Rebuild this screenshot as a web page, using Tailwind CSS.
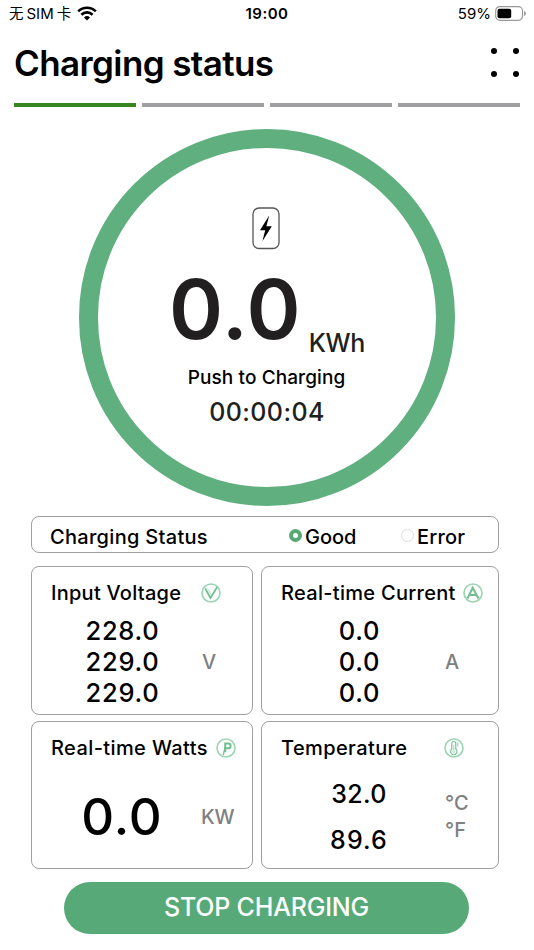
<!DOCTYPE html>
<html lang="en">
<head>
    <meta charset="UTF-8">
    <meta name="viewport" content="width=device-width, initial-scale=1.0">
    <title>Charging status</title>
    <script src="https://cdn.jsdelivr.net/npm/@tailwindcss/browser@4"></script>
</head>

<body class="bg-white text-black font-['Inter','Noto_Sans_CJK_SC',sans-serif]">
    <div class="w-[534px] h-[950px] overflow-hidden flex flex-col">
        <!-- Status bar -->
        <div class="h-7 pl-[9px] pr-[8px] grid grid-cols-3 items-center text-[15px] leading-7 whitespace-nowrap">
            <div class="flex items-center">
                <span class="text-[14.5px]">无</span><span class="ml-[3px] text-[15px]">SIM</span><span class="ml-[3px] text-[14.5px]">卡</span>
                <svg class="ml-[6px] -mt-[2px]" width="20" height="15" viewBox="0 0 20 15" fill="none" stroke="#000" stroke-width="2.6">
                    <path d="M1.2 5.4a12.6 12.6 0 0 1 17.6 0"/>
                    <path d="M4.4 8.7a8 8 0 0 1 11.2 0"/>
                    <path d="M10 14.4l-3-3a4.3 4.3 0 0 1 6 0z" fill="#000" stroke="none"/>
                </svg>
            </div>
            <p class="-ml-px text-center font-semibold tracking-[0.5px]">19:00</p>
            <div class="flex items-center justify-end">
                <span>59%</span>
                <svg class="ml-[4px] -mt-px" width="31" height="15" viewBox="0 0 31 15">
                    <rect x="0.7" y="0.7" width="26.8" height="13.6" rx="4" fill="none" stroke="#999" stroke-width="1.2"/>
                    <rect x="2.5" y="2.8" width="13.7" height="9.4" rx="2" fill="#000"/>
                    <path d="M29 5v5q2-.8 2-2.5t-2-2.5z" fill="#999"/>
                </svg>
            </div>
        </div>

        <!-- Header -->
        <div class="h-[75px] pl-[14px] pr-[14px] flex justify-between">
            <h1 class="mt-[12px] text-[35px] leading-[46px] font-semibold tracking-[-0.6px]">Charging status</h1>
            <div class="mt-[19.5px] mr-[1px] grid grid-cols-2 gap-x-4 gap-y-[17px] content-start">
                <span class="size-[6px] rounded-full bg-black"></span>
                <span class="size-[6px] rounded-full bg-black"></span>
                <span class="size-[6px] rounded-full bg-black"></span>
                <span class="size-[6px] rounded-full bg-black"></span>
            </div>
        </div>
        <div class="px-[14px] grid grid-cols-4 gap-[6px]">
            <div class="h-1 bg-[#38841f]"></div>
            <div class="h-1 bg-[#a0a0a2]"></div>
            <div class="h-1 bg-[#a0a0a2]"></div>
            <div class="h-1 bg-[#a0a0a2]"></div>
        </div>

        <!-- Dial -->
        <div class="mt-[22px] ml-[79px] w-[376px] h-[377px] shrink-0 rounded-full border-[19px] border-[#5faf7f] flex flex-col items-center text-[#221f20]">
            <svg class="mt-[59px] mr-[2px]" width="28" height="43" viewBox="0 0 28 43">
                <rect x="1" y="1" width="26" height="40.5" rx="6" fill="none" stroke="#555" stroke-width="1.3"/>
                <path d="M17.2 8.5L8 23.3h5.2l-2.8 11 9.4-15h-5.4z" fill="#000"/>
            </svg>
            <div class="h-[114px] flex items-start">
                <span class="mt-[15px] text-[82px] leading-[90px] font-semibold tracking-[1px]">0.0</span>
                <span class="ml-[7px] mt-[78px] text-[25px] leading-[30px] font-medium tracking-[-0.3px]">KWh</span>
            </div>
            <p class="mt-[2px] mr-px text-[19px] leading-6 font-medium text-black tracking-[0.1px]">Push to Charging</p>
            <p class="mt-[7px] text-[25px] leading-[30px] font-medium tracking-[0.4px]">00:00:04</p>
        </div>

        <div class="mt-[10px] ml-[31px] w-[468px]">
            <!-- Good / error row -->
            <div class="h-[37px] pl-[17px] border-[1.5px] border-[#a0a0a0] rounded-lg flex items-center text-[20px] font-medium">
                <span class="w-[240px] pt-[4px] pl-px tracking-[0.3px]">Charging Status</span>
                <span class="size-[13px] mt-[2px] rounded-full border-4 border-[#57aa78]"></span>
                <span class="ml-[3px] w-[96px] pt-[4px]">Good</span>
                <span class="size-[13px] mt-[2px] rounded-full border border-[#ddd]"></span>
                <span class="ml-[3px] pt-[4px] tracking-[0.2px]">Error</span>
            </div>

            <div class="mt-[13px] grid grid-cols-[222px_238px] gap-x-[8px] gap-y-[6px]">
                <div class="h-[149px] pl-[19px] border-[1.5px] border-[#a0a0a0] rounded-lg">
                    <div class="mt-[14px] h-6 flex items-center text-[20px] font-medium">
                        <span class="w-[150px] tracking-[0.25px]">Input Voltage</span>
                        <svg width="20" height="20" viewBox="0 0 20 20" fill="none" stroke="#6fbf90">
                            <circle cx="10" cy="10" r="9" stroke="#9ad5b2" stroke-width="1.6"/>
                            <path d="M4.2 5.5L9.5 15 16 4.3" stroke-width="1.7"/>
                            <path d="M6.5 5.5l3.7 6.5" stroke="#9ad5b2" stroke-width="0.8"/>
                        </svg>
                    </div>
                    <div class="mt-[10px] flex items-center">
                        <div class="w-[143px] text-center text-[25.5px] leading-[31px] font-medium tracking-[0.7px]">
                            <p>228.0</p>
                            <p>229.0</p>
                            <p>229.0</p>
                        </div>
                        <span class="ml-[8px] text-[20px] font-medium text-[#808080]">V</span>
                    </div>
                </div>

                <div class="h-[149px] pl-[19px] border-[1.5px] border-[#a0a0a0] rounded-lg">
                    <div class="mt-[14px] h-6 flex items-center text-[20px] font-medium">
                        <span class="w-[182px] whitespace-nowrap tracking-[0.3px]">Real-time Current</span>
                        <svg width="20" height="20" viewBox="0 0 20 20" fill="none" stroke="#6fbf90">
                            <circle cx="10" cy="10" r="9" stroke="#9ad5b2" stroke-width="1.6"/>
                            <path d="M4.5 15.5L9.7 4.8l5.8 10.7M6 12h7.5" stroke-width="2"/>
                        </svg>
                    </div>
                    <div class="mt-[10px] flex items-center">
                        <div class="w-[157px] text-center text-[25.5px] leading-[31px] font-medium tracking-[0.7px]">
                            <p>0.0</p>
                            <p>0.0</p>
                            <p>0.0</p>
                        </div>
                        <span class="ml-[7px] text-[20px] font-medium text-[#808080]">A</span>
                    </div>
                </div>

                <div class="h-[148px] pl-[19px] border-[1.5px] border-[#a0a0a0] rounded-lg">
                    <div class="mt-[14px] h-6 flex items-center text-[20px] font-medium">
                        <span class="w-[165px] whitespace-nowrap tracking-[0.4px]">Real-time Watts</span>
                        <svg width="20" height="20" viewBox="0 0 20 20" fill="none" stroke="#6fbf90">
                            <circle cx="10" cy="10" r="9" stroke="#9ad5b2" stroke-width="1.6"/>
                            <path d="M9.2 14V5.5H12q2.6 0 2.6 2.4t-2.6 2.4H9.5" stroke-width="2"/>
                            <path d="M9 9.5L7.3 17" stroke-width="1.3"/>
                        </svg>
                    </div>
                    <div class="mt-[24px] h-[66px] flex items-center">
                        <p class="w-[142px] text-center text-[51px] leading-[66px] font-medium tracking-[1px]">0.0</p>
                        <span class="ml-[8px] text-[20px] font-medium tracking-[-0.2px] text-[#808080]">KW</span>
                    </div>
                </div>

                <div class="h-[148px] pl-[19px] border-[1.5px] border-[#a0a0a0] rounded-lg">
                    <div class="mt-[14px] h-6 flex items-center text-[20px] font-medium">
                        <span class="w-[163px] tracking-[0.4px]">Temperature</span>
                        <svg width="20" height="20" viewBox="0 0 20 20" fill="none" stroke="#6fbf90">
                            <circle cx="10" cy="10" r="9" stroke="#9ad5b2" stroke-width="1.6"/>
                            <path d="M7.8 11V5.5a2 2 0 0 1 4 0V11a3.2 3.2 0 1 1-4 0z" stroke-width="1.1"/>
                            <path d="M9.8 7v5" stroke="#9ad5b2" stroke-width="1"/>
                            <path d="M13.8 4.5v4" stroke="#9ad5b2" stroke-width="1.2"/>
                            <circle cx="9.8" cy="13.6" r="1" stroke="#9ad5b2" stroke-width="0.8"/>
                        </svg>
                    </div>
                    <div class="mt-[11px] flex items-center">
                        <div class="w-[156px] text-center text-[25px] leading-[46px] font-medium tracking-[0.3px]">
                            <p>32.0</p>
                            <p class="tracking-[1.1px]">89.6</p>
                        </div>
                        <div class="ml-[8px] text-[20px] leading-[27px] font-medium tracking-[0.2px] text-[#808080]">
                            <p>°C</p>
                            <p>°F</p>
                        </div>
                    </div>
                </div>
            </div>
        </div>

        <button type="button" class="mt-[12.5px] ml-[64px] w-[405px] h-[52px] pt-px shrink-0 rounded-full bg-[#57aa78] text-white text-[25px] font-medium tracking-[-0.2px]">STOP CHARGING</button>
    </div>
</body>
</html>
